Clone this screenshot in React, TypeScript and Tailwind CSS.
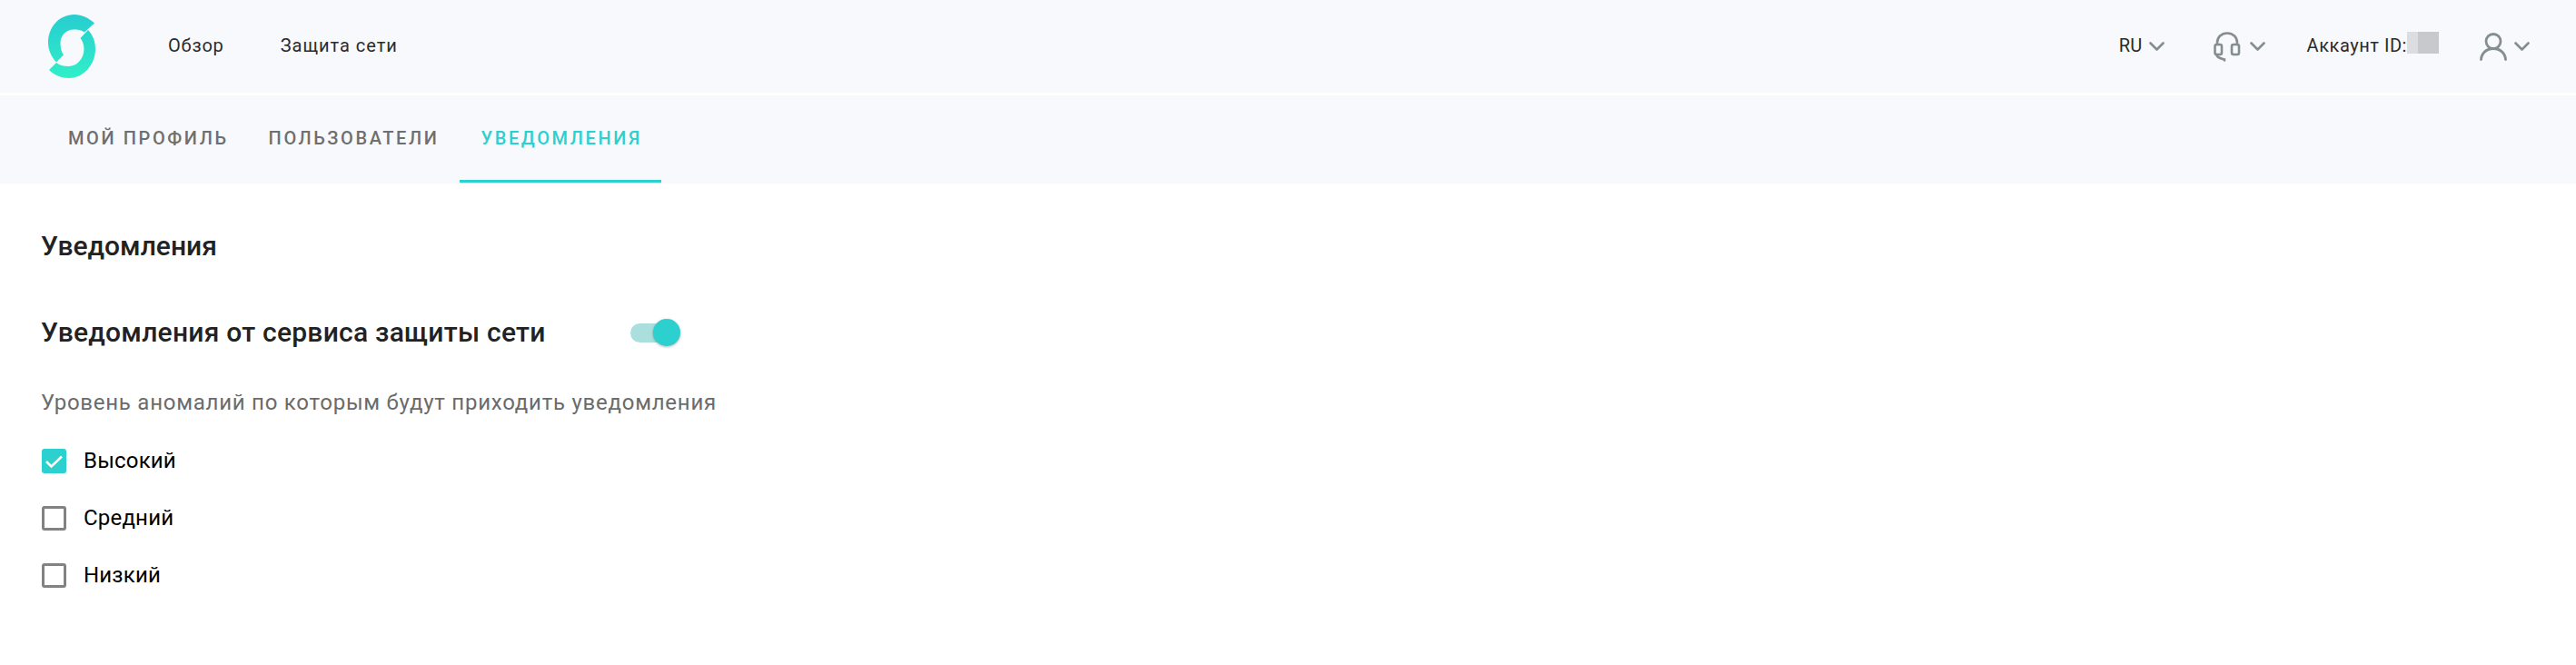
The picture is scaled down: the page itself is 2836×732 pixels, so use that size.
import React from "react";

const Chevron = ({ className = "" }: { className?: string }) => (
  <svg className={className} width="17" height="11" viewBox="0 0 17 11" fill="none">
    <path d="M1.5 1.5 8.5 8.5 15.5 1.5" stroke="#858e8e" strokeWidth="2.6" strokeLinecap="round" strokeLinejoin="round" />
  </svg>
);

const Logo = () => (
  <svg width="52" height="70" viewBox="53 16 52 70" className="block">
    <defs>
      <linearGradient id="lg" gradientUnits="userSpaceOnUse" x1="80" y1="16" x2="80" y2="86">
        <stop offset="0" stopColor="#27cdd0" />
        <stop offset="1" stopColor="#30efc8" />
      </linearGradient>
    </defs>
    <path fill="url(#lg)" d="M104 25.5C97 19.5 90 16 82 16C65 16 53 30 53 47C53 55 56.5 62.5 62 68.5L70 60.5C67.5 57 66.5 52 66.5 47.5C66.5 39 73 32.5 81 32.5C85.5 32.5 89.5 33 93 35.5Z" />
    <path fill="url(#lg)" d="M54 77C60 83 68 86 76 86C92 86 105 71 105 54C105 46 102.5 39 97 33L88.5 42C91 45 92.5 49.5 92.5 54C92.5 64 85 73 75.5 73C70.5 73 66 72 62 69Z" />
  </svg>
);

const Check = ({ checked, label }: { checked?: boolean; label: string }) => (
  <div className="flex items-center h-[27px] gap-[19px] ml-[1px]">
    {checked ? (
      <div className="w-[27px] h-[27px] rounded-[3px] bg-[#2bd0cf] flex items-center justify-center">
        <svg width="21" height="16" viewBox="0 0 21 16" fill="none">
          <path d="M2 8 7.5 13.5 19 2.5" stroke="#ffffff" strokeWidth="2.6" />
        </svg>
      </div>
    ) : (
      <div className="w-[27px] h-[27px] rounded-[3px] border-[3px] border-[#828282] bg-white" />
    )}
    <span className="text-[24px] leading-[27px] text-black tracking-[0.2px]">{label}</span>
  </div>
);

export default function App() {
  return (
    <div className="min-h-[732px] bg-white font-['Roboto',sans-serif]">
      <header className="h-[102px] bg-[#f8f9fd] flex items-center pl-[53px] pr-[51px] text-[#2b2b2b] text-[20px]">
        <Logo />
        <span className="ml-[80px] tracking-[0.8px] -translate-y-[1px]">Обзор</span>
        <span className="ml-[62px] tracking-[1px] -translate-y-[1px]">Защита сети</span>
        <div className="ml-auto flex items-center">
          <span className="tracking-[0.3px] -translate-y-[1px]">RU</span>
          <Chevron className="ml-[7px]" />
          <svg className="ml-[54px]" width="30" height="33" viewBox="0 0 30 33" fill="none" stroke="#858e8e" strokeWidth="2.6" strokeLinecap="round">
            <path d="M4 14V12C4 6 8.5 1.5 15 1.5S26 6 26 12V14" />
            <rect x="1.5" y="14" width="7.5" height="11" rx="2" />
            <rect x="20" y="14" width="8" height="11" rx="2" />
            <path d="M3 25C4 28 7 29.5 12 30.5V31.5" />
          </svg>
          <Chevron className="ml-[10px]" />
          <span className="ml-[46px] tracking-[0.55px] -translate-y-[1px]">Аккаунт ID:</span>
          <div className="flex h-[24px] -translate-y-[4px]">
            <div className="w-[12px] bg-[#dcdde1]" />
            <div className="w-[23px] bg-[#c8c9cb]" />
          </div>
          <svg className="ml-[45px]" width="30" height="31" viewBox="0 0 30 31" fill="none" stroke="#858e8e" strokeWidth="2.8" strokeLinecap="round">
            <circle cx="15" cy="9.5" r="8" />
            <path d="M1.5 29.5C2 22.5 7.5 17.5 15 17.5S28 22.5 28.5 29.5" />
          </svg>
          <Chevron className="ml-[8px]" />
        </div>
      </header>

      <nav className="mt-[3px] h-[97px] bg-[#f8f9fd] flex pl-[53px] text-[20px] font-medium tracking-[2.6px]">
        <div className="px-[22px] h-full flex items-center pb-[4px] text-[#6f6f6f]">МОЙ ПРОФИЛЬ</div>
        <div className="px-[22px] h-full flex items-center pb-[4px] text-[#6f6f6f]">ПОЛЬЗОВАТЕЛИ</div>
        <div className="ml-[1px] pl-[23px] pr-[21px] h-full flex items-center pb-[4px] text-[#2bd0cf] relative">
          УВЕДОМЛЕНИЯ
          <div className="absolute left-0 right-0 bottom-[1px] h-[3px] bg-[#2bd0cf]" />
        </div>
      </nav>

      <main className="pl-[45px]">
        <h1 className="mt-[51px] text-[30px] leading-[36px] font-medium text-[#222222]">Уведомления</h1>
        <div className="mt-[59px] flex items-center h-[36px]">
          <h2 className="text-[30px] leading-[36px] font-medium text-[#222222] tracking-[0.25px]">Уведомления от сервиса защиты сети</h2>
          <div className="ml-[93px] relative w-[55px] h-[30px] flex items-center">
            <div className="w-[50px] h-[21px] rounded-full bg-[#abdfdd]" />
            <div className="absolute right-0 top-0 w-[30px] h-[30px] rounded-full bg-[#2bd0cf] shadow-[0_1px_3px_rgba(0,0,0,0.3)]" />
          </div>
        </div>
        <p className="mt-[43px] text-[24px] leading-[32px] text-[#6b6b6b] tracking-[0.75px]">Уровень аномалий по которым будут приходить уведомления</p>
        <div className="mt-[35px] flex flex-col gap-[36px]">
          <Check checked label="Высокий" />
          <Check label="Средний" />
          <Check label="Низкий" />
        </div>
      </main>
    </div>
  );
}
